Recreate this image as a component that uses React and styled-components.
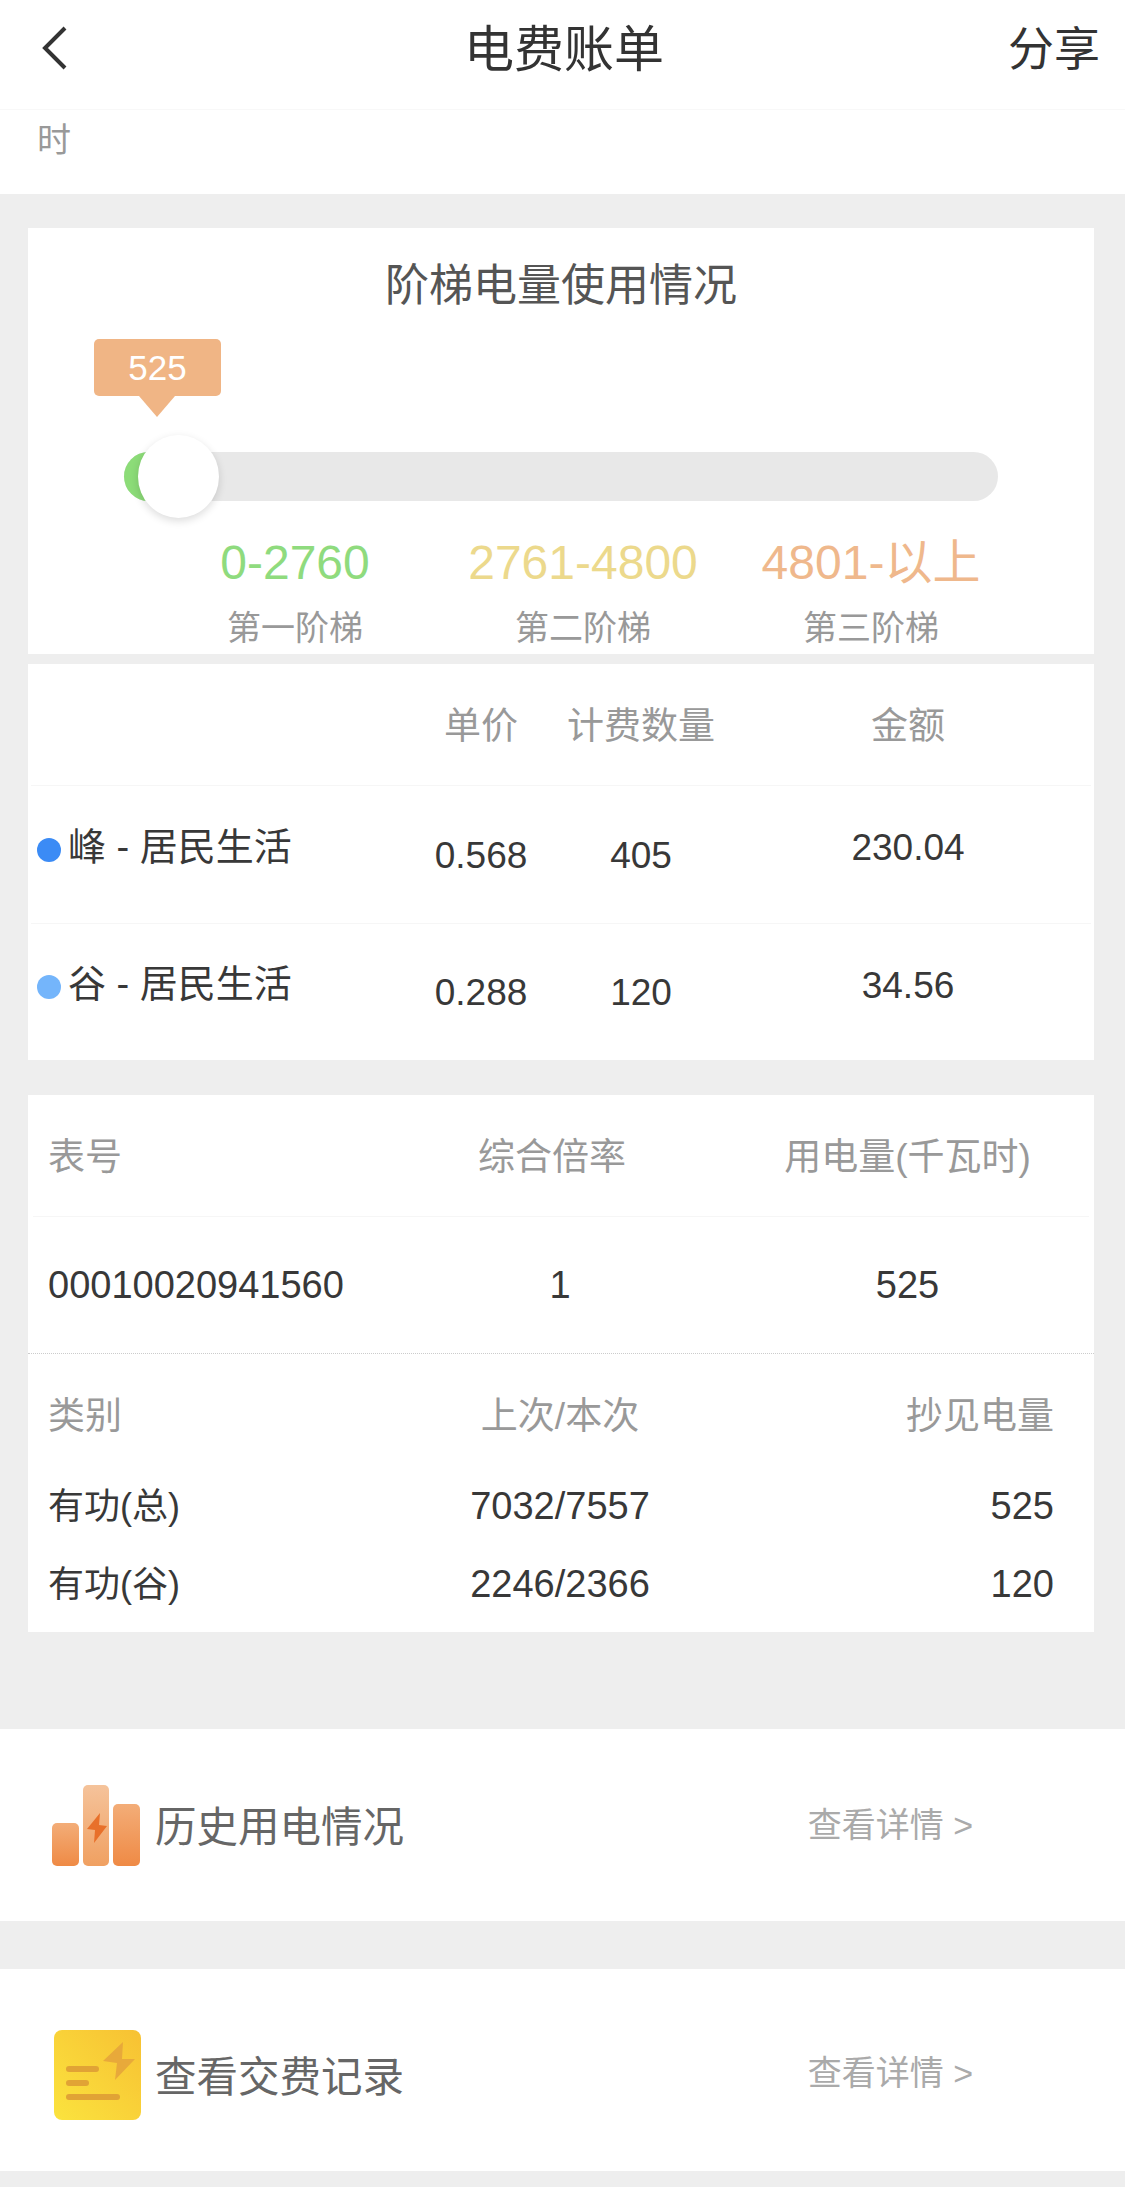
import React from "react";
import styled, { createGlobalStyle } from "styled-components";

const GlobalStyle = createGlobalStyle`
  html, body {
    margin: 0;
    padding: 0;
    background: #eeeeee;
  }
  * {
    box-sizing: border-box;
  }
  body {
    font-family: "Liberation Sans", "Noto Sans CJK SC", sans-serif;
  }
`;

const Page = styled.div`
  width: 1125px;
  height: 2210px;
  overflow: hidden;
  background: #eeeeee;
  line-height: 1.2;
`;

const Nav = styled.div`
  display: grid;
  grid-template-columns: 1fr auto 1fr;
  align-items: center;
  height: 110px;
  padding: 0 25px 14px 28px;
  background: #fff;
  border-bottom: 1px solid #f8f8f8;
  color: #333;
`;

const Back = styled.svg`
  display: block;
  width: 26px;
  height: 44px;
  margin-left: 14px;
`;

const NavTitle = styled.div`
  padding-top: 5px;
  font-size: 50px;
`;

const Share = styled.div`
  padding-top: 5px;
  font-size: 46px;
  text-align: right;
`;

const Notice = styled.div`
  height: 84px;
  padding-left: 37px;
  background: #fff;
  color: #999;
  font-size: 34px;
  line-height: 60px;
`;

const Content = styled.div`
  padding: 34px 31px 0 28px;
`;

const Card = styled.div`
  background: #fff;
  margin-top: ${(p) => p.$top || 0}px;
  padding-bottom: ${(p) => p.$bottom || 0}px;
`;

const TierTitle = styled.div`
  height: 110px;
  padding-top: 3px;
  text-align: center;
  font-size: 44px;
  line-height: 110px;
  color: #555;
`;

const Track = styled.div`
  position: relative;
  height: 49px;
  margin: 114px 96px 38px 96px;
  border-radius: 25px;
  background: #e8e8e8;
`;

const Fill = styled.div`
  width: 50px;
  height: 100%;
  border-radius: 25px;
  background: #8cdc78;
`;

const Thumb = styled.div`
  position: absolute;
  left: 14px;
  top: -17px;
  width: 81px;
  height: 83px;
  border-radius: 50%;
  background: #fff;
  box-shadow: 0 3px 8px rgba(0, 0, 0, 0.14);
`;

const Bubble = styled.div`
  position: absolute;
  left: -30px;
  top: -113px;
  width: 127px;
  height: 57px;
  border-radius: 5px;
  background: #f0b585;
  color: #fff;
  font-size: 35px;
  line-height: 57px;
  text-align: center;

  &::after {
    content: "";
    position: absolute;
    left: 45px;
    top: 57px;
    border-left: 18px solid transparent;
    border-right: 18px solid transparent;
    border-top: 21px solid #f0b585;
  }
`;

const Tiers = styled.div`
  display: grid;
  grid-template-columns: repeat(3, 288px);
  margin-left: 123px;
  padding-bottom: 6px;
  text-align: center;
`;

const TierRange = styled.div`
  height: 48px;
  font-size: 48px;
  line-height: 48px;
  color: ${(p) => p.$color};
`;

const TierName = styled.div`
  height: 40px;
  margin-top: 21px;
  font-size: 34px;
  line-height: 40px;
  color: #999;
`;

const PriceRow = styled.div`
  display: grid;
  grid-template-columns: 370px 160px 160px 374px;
  align-items: center;
  height: ${(p) => p.$height}px;
  margin: 0 3px;
  padding-top: ${(p) => (p.$head ? 5 : 0)}px;
  font-size: 37px;
  color: ${(p) => (p.$head ? "#999" : "#383838")};
  text-align: center;
  border-bottom: ${(p) => (p.$line ? "1px solid #f6f6f6" : "none")};
`;

const Figure = styled.div`
  padding-top: 3px;
`;

const Amount = styled.div`
  padding-bottom: 12px;
`;

const Name = styled.div`
  display: flex;
  align-items: center;
  gap: 7px;
  padding: 0 0 14px 6px;
  font-size: 38px;
  text-align: left;
`;

const Dot = styled.span`
  flex: none;
  width: 24px;
  height: 24px;
  margin-top: 4px;
  border-radius: 50%;
  background: ${(p) => p.$color};
`;

const MeterRow = styled.div`
  display: grid;
  grid-template-columns: 343px 330px 1fr;
  align-items: center;
  height: ${(p) => p.$height}px;
  padding: ${(p) => p.$top || 0}px 0 0 20px;
  font-size: ${(p) => (p.$head ? 37 : 38)}px;
  color: ${(p) => (p.$head ? "#999" : "#383838")};
`;

const Center = styled.div`
  text-align: center;
  padding-left: ${(p) => p.$left || 0}px;
  padding-right: ${(p) => p.$right || 0}px;
`;

const Rule = styled.div`
  height: 1px;
  margin: 0 5px;
  background: #f6f6f6;
`;

const Dotted = styled.div`
  border-top: 1px dotted #ccc;
`;

const Right = styled.div`
  text-align: right;
  padding-right: 40px;
`;

const TypeCell = styled.div`
  font-size: 36px;
`;

const Entry = styled.div`
  display: flex;
  align-items: center;
  justify-content: space-between;
  height: ${(p) => p.$height}px;
  margin-top: ${(p) => p.$top}px;
  padding: ${(p) => p.$pad || 0}px 152px 0 52px;
  background: #fff;
`;

const EntryLabel = styled.div`
  display: flex;
  align-items: center;
  font-size: 41.5px;
  color: #666;
`;

const IconSlot = styled.div`
  display: flex;
  width: 103px;
  padding-left: ${(p) => p.$indent || 0}px;
`;

const LabelText = styled.span`
  padding-top: 5px;
`;

const EntryLink = styled.div`
  padding-bottom: ${(p) => p.$lift || 0}px;
  font-size: 34px;
  color: #aaa;
`;

const Footer = styled.div`
  height: 23px;
  margin-top: 16px;
  background: #fff;
`;

const HistoryIcon = () => (
  <svg width="88" height="81" viewBox="0 0 88 81">
    <defs>
      <linearGradient id="barSide" x1="0" y1="0" x2="0" y2="1">
        <stop offset="0" stopColor="#f3ad78" />
        <stop offset="1" stopColor="#ef8a45" />
      </linearGradient>
      <linearGradient id="barMid" x1="0" y1="0" x2="0" y2="1">
        <stop offset="0" stopColor="#f5c39b" />
        <stop offset="1" stopColor="#f0a061" />
      </linearGradient>
    </defs>
    <rect x="0" y="38" width="27" height="43" rx="5" fill="url(#barSide)" />
    <rect x="31" y="0" width="26" height="81" rx="5" fill="url(#barMid)" />
    <rect x="61" y="19" width="27" height="62" rx="5" fill="url(#barSide)" />
    <polygon points="48,28 35,44 43,45 42,58 55,41 47,40" fill="#e8702a" />
  </svg>
);

const RecordIcon = () => (
  <svg width="87" height="90" viewBox="0 0 87 90">
    <defs>
      <linearGradient id="paper" x1="1" y1="0" x2="0" y2="1">
        <stop offset="0" stopColor="#f7c133" />
        <stop offset="1" stopColor="#fbe33e" />
      </linearGradient>
    </defs>
    <rect width="87" height="90" rx="8" fill="url(#paper)" />
    <g stroke="#e1a335" strokeWidth="6" strokeLinecap="round">
      <line x1="15" y1="39" x2="42" y2="39" />
      <line x1="15" y1="53" x2="32" y2="53" />
      <line x1="15" y1="67" x2="63" y2="67" />
    </g>
    <polygon points="69,12 49,31 63,33 61,50 81,29 68,29" fill="#e8a93a" />
  </svg>
);

const tiers = [
  { range: "0-2760", name: "第一阶梯", color: "#8fdb7e" },
  { range: "2761-4800", name: "第二阶梯", color: "#ecd98c" },
  { range: "4801-以上", name: "第三阶梯", color: "#efb88c" },
];

const prices = [
  { name: "峰 - 居民生活", dot: "#3b8bf5", price: "0.568", count: "405", amount: "230.04", height: 138, line: true },
  { name: "谷 - 居民生活", dot: "#74b5fb", price: "0.288", count: "120", amount: "34.56", height: 136 },
];

const readings = [
  { type: "有功(总)", range: "7032/7557", value: "525" },
  { type: "有功(谷)", range: "2246/2366", value: "120" },
];

export default function App() {
  return (
    <Page>
      <GlobalStyle />
      <Nav>
        <Back viewBox="0 0 26 44">
          <polyline points="23,2 3,22 23,42" fill="none" stroke="#333" strokeWidth="4" />
        </Back>
        <NavTitle>电费账单</NavTitle>
        <Share>分享</Share>
      </Nav>
      <Notice>时</Notice>

      <Content>
        <Card>
          <TierTitle>阶梯电量使用情况</TierTitle>
          <Track>
            <Fill />
            <Thumb />
            <Bubble>525</Bubble>
          </Track>
          <Tiers>
            {tiers.map((t) => (
              <div key={t.name}>
                <TierRange $color={t.color}>{t.range}</TierRange>
                <TierName>{t.name}</TierName>
              </div>
            ))}
          </Tiers>
        </Card>

        <Card $top={10}>
          <PriceRow $head $line $height={122}>
            <div />
            <div>单价</div>
            <div>计费数量</div>
            <div>金额</div>
          </PriceRow>
          {prices.map((p) => (
            <PriceRow key={p.name} $height={p.height} $line={p.line}>
              <Name>
                <Dot $color={p.dot} />
                {p.name}
              </Name>
              <Figure>{p.price}</Figure>
              <Figure>{p.count}</Figure>
              <Amount>{p.amount}</Amount>
            </PriceRow>
          ))}
        </Card>

        <Card $top={35} $bottom={8}>
          <MeterRow $head $height={121} $top={5}>
            <div>表号</div>
            <Center $right={8}>综合倍率</Center>
            <Center>用电量(千瓦时)</Center>
          </MeterRow>
          <Rule />
          <MeterRow $height={136} $top={2}>
            <div>00010020941560</div>
            <Center $left={8}>1</Center>
            <Center>525</Center>
          </MeterRow>
          <Dotted />
          <MeterRow $head $height={114} $top={12}>
            <div>类别</div>
            <Center $left={8}>上次/本次</Center>
            <Right>抄见电量</Right>
          </MeterRow>
          {readings.map((r) => (
            <MeterRow key={r.type} $height={78}>
              <TypeCell>{r.type}</TypeCell>
              <Center $left={8}>{r.range}</Center>
              <Right>{r.value}</Right>
            </MeterRow>
          ))}
        </Card>
      </Content>

      <Entry $height={192} $top={97}>
        <EntryLabel>
          <IconSlot>
            <HistoryIcon />
          </IconSlot>
          <LabelText>历史用电情况</LabelText>
        </EntryLabel>
        <EntryLink>查看详情 &gt;</EntryLink>
      </Entry>
      <Entry $height={202} $top={48} $pad={10}>
        <EntryLabel>
          <IconSlot $indent={2}>
            <RecordIcon />
          </IconSlot>
          <LabelText>查看交费记录</LabelText>
        </EntryLabel>
        <EntryLink $lift={3}>查看详情 &gt;</EntryLink>
      </Entry>
      <Footer />
    </Page>
  );
}
